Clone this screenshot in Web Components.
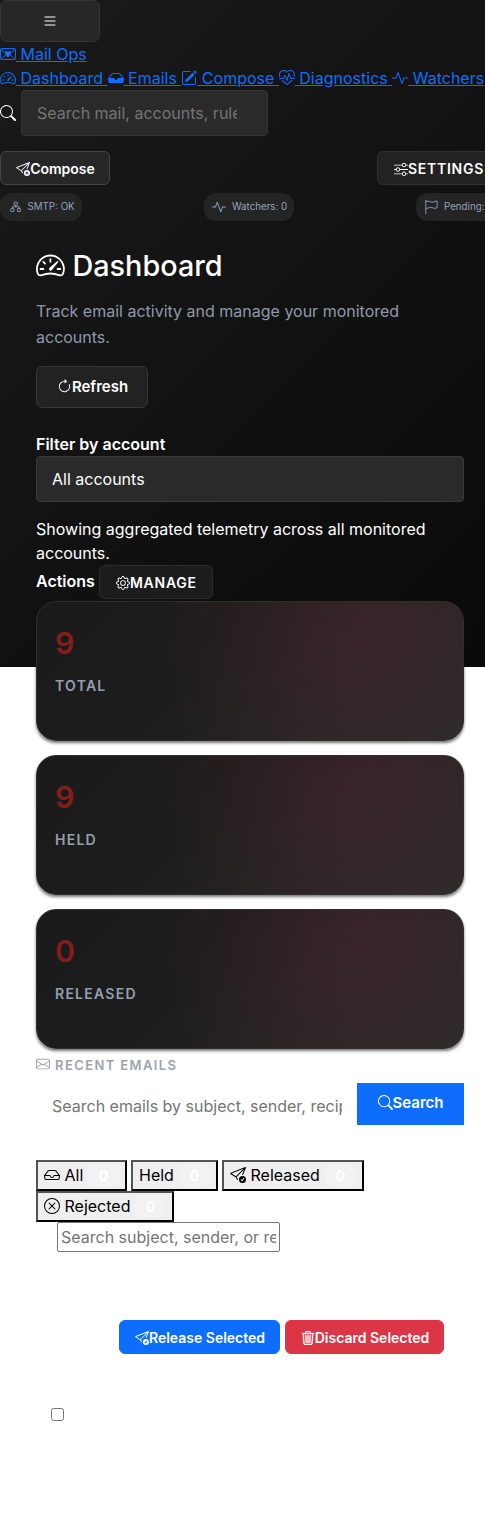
<!DOCTYPE html>
<html lang="en">
<head>
<meta charset="utf-8">
<title>Mail Ops</title>
<style>
html{background:#fff}
body{margin:0;font:16px/24px Inter,"Liberation Sans",sans-serif;color:#fff;width:485px;height:1530px;overflow:hidden;position:relative}
</style>
</head>
<body>
<mail-app></mail-app>
<script>
const ICONS={
list:'<path d="M2.5 12a.5.5 0 0 1 .5-.5h10a.5.5 0 0 1 0 1H3a.5.5 0 0 1-.5-.5m0-4a.5.5 0 0 1 .5-.5h10a.5.5 0 0 1 0 1H3a.5.5 0 0 1-.5-.5m0-4a.5.5 0 0 1 .5-.5h10a.5.5 0 0 1 0 1H3a.5.5 0 0 1-.5-.5"/>',
mailheart:'<g fill="none" stroke="currentColor"><rect x=".5" y="2.5" width="15" height="11" rx="1"/><path d="M1 3.500l3.500 2.700M15 3.500l-3.500 2.700M1 13l4.700-4M15 13l-4.700-4"/></g><path d="M8 5.600c2-2 6 1.100 0 5.900-6-4.800-2-7.900 0-5.900"/>',
speed:'<path d="M8 4a.5.5 0 0 1 .5.5V6a.5.5 0 0 1-1 0V4.5A.5.5 0 0 1 8 4M3.732 5.732a.5.5 0 0 1 .707 0l.915.914a.5.5 0 1 1-.708.708l-.914-.915a.5.5 0 0 1 0-.707M2 10a.5.5 0 0 1 .5-.5h1.586a.5.5 0 0 1 0 1H2.5A.5.5 0 0 1 2 10m9.5 0a.5.5 0 0 1 .5-.5h1.5a.5.5 0 0 1 0 1H12a.5.5 0 0 1-.5-.5m.754-4.246a.39.39 0 0 0-.527-.02L7.547 9.31a.91.91 0 1 0 1.302 1.258l3.434-4.297a.39.39 0 0 0-.029-.518z"/><path fill-rule="evenodd" d="M0 10a8 8 0 1 1 15.547 2.661c-.442 1.253-1.845 1.602-2.932 1.25C11.309 13.488 9.475 13 8 13c-1.474 0-3.31.488-4.615.911-1.087.352-2.49.003-2.932-1.25A8 8 0 0 1 0 10m8-7a7 7 0 0 0-6.603 9.329c.203.575.923.876 1.68.63C4.397 12.533 6.358 12 8 12s3.604.532 4.923.96c.757.245 1.477-.056 1.68-.631A7 7 0 0 0 8 3"/>',
inboxfill:'<path d="M4.98 4a.5.5 0 0 0-.39.188L1.54 8H6a.5.5 0 0 1 .5.5 1.5 1.5 0 1 0 3 0A.5.5 0 0 1 10 8h4.46l-3.05-3.812A.5.5 0 0 0 11.02 4zm-1.17-.437A1.5 1.5 0 0 1 4.98 3h6.04a1.5 1.5 0 0 1 1.17.563l3.7 4.625a.5.5 0 0 1 .106.374l-.39 3.124A1.5 1.5 0 0 1 14.117 13H1.883a1.5 1.5 0 0 1-1.489-1.314l-.39-3.124a.5.5 0 0 1 .106-.374z"/>',
inbox:'<path d="M4.98 4a.5.5 0 0 0-.39.188L1.54 8H6a.5.5 0 0 1 .5.5 1.5 1.5 0 1 0 3 0A.5.5 0 0 1 10 8h4.46l-3.05-3.812A.5.5 0 0 0 11.02 4zm9.954 5H10.45a2.5 2.5 0 0 1-4.9 0H1.066l.32 2.562a.5.5 0 0 0 .497.438h12.234a.5.5 0 0 0 .496-.438zM3.809 3.563A1.5 1.5 0 0 1 4.981 3h6.038a1.5 1.5 0 0 1 1.172.563l3.7 4.625a.5.5 0 0 1 .105.374l-.39 3.124A1.5 1.5 0 0 1 14.117 13H1.883a1.5 1.5 0 0 1-1.489-1.314l-.39-3.124a.5.5 0 0 1 .106-.374z"/>',
pencil:'<path d="M15.502 1.94a.5.5 0 0 1 0 .706L14.459 3.69l-2-2L13.502.646a.5.5 0 0 1 .707 0l1.293 1.293zm-1.75 2.456-2-2L4.939 9.21a.5.5 0 0 0-.121.196l-.805 2.414a.25.25 0 0 0 .316.316l2.414-.805a.5.5 0 0 0 .196-.12l6.813-6.814z"/><path fill-rule="evenodd" d="M1 13.5A1.5 1.5 0 0 0 2.5 15h11a1.5 1.5 0 0 0 1.5-1.5v-6a.5.5 0 0 0-1 0v6a.5.5 0 0 1-.5.5h-11a.5.5 0 0 1-.5-.5v-11a.5.5 0 0 1 .5-.5H9a.5.5 0 0 0 0-1H2.5A1.5 1.5 0 0 0 1 2.5z"/>',
heart:'<path fill-rule="evenodd" d="m8 2.748-.717-.737C5.6.281 2.514.878 1.4 3.053.918 3.995.78 5.323 1.508 7H.43c-2.128-5.697 4.165-8.83 7.394-5.857q.09.083.176.171a3 3 0 0 1 .176-.17c3.23-2.974 9.522.159 7.394 5.856h-1.078c.728-1.677.59-3.005.108-3.947C13.486.878 10.4.28 8.717 2.01zM2.212 10h1.315C4.593 11.183 6.05 12.458 8 13.795c1.949-1.337 3.407-2.612 4.473-3.795h1.315c-1.265 1.566-3.14 3.25-5.788 5-2.648-1.75-4.523-3.434-5.788-5"/><path d="M10.464 3.314a.5.5 0 0 0-.945.049L7.921 8.956 6.464 5.314a.5.5 0 0 0-.88-.091L3.732 8H.5a.5.5 0 0 0 0 1H4a.5.5 0 0 0 .416-.223l1.473-2.209 1.647 4.118a.5.5 0 0 0 .945-.049l1.598-5.593 1.457 3.642A.5.5 0 0 0 12 9h3.5a.5.5 0 0 0 0-1h-3.162z"/>',
activity:'<path d="M6 2a.5.5 0 0 1 .47.33L10 12.036l1.53-4.208A.5.5 0 0 1 12 7.5h3.5a.5.5 0 0 1 0 1h-3.15l-1.88 5.17a.5.5 0 0 1-.94 0L6 3.964 4.47 8.171A.5.5 0 0 1 4 8.5H.5a.5.5 0 0 1 0-1h3.15l1.88-5.17A.5.5 0 0 1 6 2"/>',
search:'<path d="M11.742 10.344a6.5 6.5 0 1 0-1.397 1.398h-.001q.044.06.098.115l3.85 3.85a1 1 0 0 0 1.415-1.414l-3.85-3.85a1 1 0 0 0-.115-.1zM12 6.5a5.5 5.5 0 1 1-11 0 5.5 5.5 0 0 1 11 0"/>',
sendplus:'<path d="M15.964.686a.5.5 0 0 0-.65-.65L.767 5.855a.75.75 0 0 0-.124 1.329l4.995 3.178 1.531 2.406a.5.5 0 0 0 .844-.536L6.637 10.07l7.494-7.494-1.895 4.738a.5.5 0 1 0 .928.372zm-2.54 1.183L5.93 9.363 1.591 6.602z"/><path fill-rule="evenodd" d="M16 12.5a3.5 3.5 0 1 1-7 0 3.5 3.5 0 0 1 7 0m-3.5-2a.5.5 0 0 0-.5.5v1h-1a.5.5 0 0 0 0 1h1v1a.5.5 0 0 0 1 0v-1h1a.5.5 0 0 0 0-1h-1v-1a.5.5 0 0 0-.5-.5"/>',
sendcheck:'<path d="M15.964.686a.5.5 0 0 0-.65-.65L.767 5.855a.75.75 0 0 0-.124 1.329l4.995 3.178 1.531 2.406a.5.5 0 0 0 .844-.536L6.637 10.07l7.494-7.494-1.895 4.738a.5.5 0 1 0 .928.372zm-2.54 1.183L5.93 9.363 1.591 6.602z"/><path d="M16 12.5a3.5 3.5 0 1 1-7 0 3.5 3.5 0 0 1 7 0m-1.993-1.679a.5.5 0 0 0-.686.172l-1.17 1.95-.547-.547a.5.5 0 0 0-.708.708l.774.773a.75.75 0 0 0 1.174-.144l1.335-2.226a.5.5 0 0 0-.172-.686"/>',
sliders:'<path fill-rule="evenodd" d="M11.5 2a1.5 1.5 0 1 0 0 3 1.5 1.5 0 0 0 0-3M9.05 3a2.5 2.5 0 0 1 4.9 0H16v1h-2.05a2.5 2.5 0 0 1-4.9 0H0V3zM4.5 7a1.5 1.5 0 1 0 0 3 1.5 1.5 0 0 0 0-3M2.05 8a2.5 2.5 0 0 1 4.9 0H16v1H6.95a2.5 2.5 0 0 1-4.9 0H0V8zm9.45 4a1.5 1.5 0 1 0 0 3 1.5 1.5 0 0 0 0-3m-2.45 1a2.5 2.5 0 0 1 4.9 0H16v1h-2.05a2.5 2.5 0 0 1-4.9 0H0v-1z"/>',
gear:'<path d="M8 4.754a3.246 3.246 0 1 0 0 6.492 3.246 3.246 0 0 0 0-6.492M5.754 8a2.246 2.246 0 1 1 4.492 0 2.246 2.246 0 0 1-4.492 0"/><path d="M9.796 1.343c-.527-1.79-3.065-1.79-3.592 0l-.094.319a.873.873 0 0 1-1.255.52l-.292-.16c-1.64-.892-3.433.902-2.54 2.541l.159.292a.873.873 0 0 1-.52 1.255l-.319.094c-1.79.527-1.79 3.065 0 3.592l.319.094a.873.873 0 0 1 .52 1.255l-.16.292c-.892 1.64.901 3.434 2.541 2.54l.292-.159a.873.873 0 0 1 1.255.52l.094.319c.527 1.79 3.065 1.79 3.592 0l.094-.319a.873.873 0 0 1 1.255-.52l.292.16c1.64.893 3.434-.902 2.54-2.541l-.159-.292a.873.873 0 0 1 .52-1.255l.319-.094c1.79-.527 1.79-3.065 0-3.592l-.319-.094a.873.873 0 0 1-.52-1.255l.16-.292c.893-1.64-.902-3.433-2.541-2.54l-.292.159a.873.873 0 0 1-1.255-.52zm-2.633.283c.246-.835 1.428-.835 1.674 0l.094.319a1.873 1.873 0 0 0 2.693 1.115l.291-.16c.764-.415 1.6.42 1.184 1.185l-.159.292a1.873 1.873 0 0 0 1.116 2.692l.318.094c.835.246.835 1.428 0 1.674l-.319.094a1.873 1.873 0 0 0-1.115 2.693l.16.291c.415.764-.42 1.6-1.185 1.184l-.291-.159a1.873 1.873 0 0 0-2.693 1.116l-.094.318c-.246.835-1.428.835-1.674 0l-.094-.319a1.873 1.873 0 0 0-2.692-1.115l-.292.16c-.764.415-1.6-.42-1.184-1.185l.159-.291A1.873 1.873 0 0 0 1.945 8.93l-.319-.094c-.835-.246-.835-1.428 0-1.674l.319-.094A1.873 1.873 0 0 0 3.06 4.377l-.16-.292c-.415-.764.42-1.6 1.185-1.184l.292.159a1.873 1.873 0 0 0 2.692-1.115z"/>',
refresh:'<path fill-rule="evenodd" d="M8 3a5 5 0 1 0 4.546 2.914.5.5 0 0 1 .908-.417A6 6 0 1 1 8 2z"/><path d="M8 4.466V.534a.25.25 0 0 1 .41-.192l2.36 1.966c.12.1.12.284 0 .384L8.41 4.658A.25.25 0 0 1 8 4.466"/>',
envelope:'<path d="M0 4a2 2 0 0 1 2-2h12a2 2 0 0 1 2 2v8a2 2 0 0 1-2 2H2a2 2 0 0 1-2-2zm2-1a1 1 0 0 0-1 1v.217l7 4.2 7-4.2V4a1 1 0 0 0-1-1zm13 2.383-4.708 2.825L15 11.105zm-.034 6.876-5.64-3.471L8 9.583l-1.326-.795-5.64 3.47A1 1 0 0 0 2 13h12a1 1 0 0 0 .966-.741M1 11.105l4.708-2.897L1 5.383z"/>',
xcircle:'<path d="M8 15A7 7 0 1 1 8 1a7 7 0 0 1 0 14m0 1A8 8 0 1 0 8 0a8 8 0 0 0 0 16"/><path d="M4.646 4.646a.5.5 0 0 1 .708 0L8 7.293l2.646-2.647a.5.5 0 0 1 .708.708L8.707 8l2.647 2.646a.5.5 0 0 1-.708.708L8 8.707l-2.646 2.647a.5.5 0 0 1-.708-.708L7.293 8 4.646 5.354a.5.5 0 0 1 0-.708"/>',
trash:'<path stroke="currentColor" stroke-width=".5" d="M6.5 1h3a.5.5 0 0 1 .5.5v1H6v-1a.5.5 0 0 1 .5-.5M11 2.5v-1A1.5 1.5 0 0 0 9.5 0h-3A1.5 1.5 0 0 0 5 1.5v1H1.5a.5.5 0 0 0 0 1h.538l.853 10.66A2 2 0 0 0 4.885 16h6.23a2 2 0 0 0 1.994-1.84l.853-10.66h.538a.5.5 0 0 0 0-1zm1.958 1-.846 10.58a1 1 0 0 1-.997.92h-6.23a1 1 0 0 1-.997-.92L3.042 3.5zm-7.487 1a.5.5 0 0 1 .528.47l.5 8.5a.5.5 0 0 1-.998.06L5 5.03a.5.5 0 0 1 .47-.53Zm5.058 0a.5.5 0 0 1 .47.53l-.5 8.5a.5.5 0 1 1-.998-.06l.5-8.5a.5.5 0 0 1 .528-.47M8 4.5a.5.5 0 0 1 .5.5v8.5a.5.5 0 0 1-1 0V5a.5.5 0 0 1 .5-.5"/>',
diagram:'<g fill="none" stroke="currentColor" stroke-width="1.3"><rect x="5.6" y="1.6" width="4.8" height="4" rx=".8"/><rect x="1" y="10.6" width="4.6" height="4" rx=".8"/><rect x="10.4" y="10.6" width="4.6" height="4" rx=".8"/><path d="M8 5.6V8M3.3 10.6V8h9.4v2.6"/></g>',
flag:'<path fill="none" stroke="currentColor" d="M2 0v16M2 1.500C6 .5 8 3.500 11 2.300L15 1v8C11 10.800 9 7.500 6 8.800L2 9.800"/>'
};
const define=(name,css,html)=>customElements.define(name,class extends HTMLElement{
  connectedCallback(){
    if(this.shadowRoot)return;
    const attrs=n=>this.getAttribute(n)||'';
    this.attachShadow({mode:'open'}).innerHTML=`<style>${css}</style>${typeof html==='function'?html(attrs):html}`;
  }
});
define('ui-icon',`:host{display:inline-block;width:1em;height:1em;line-height:1;vertical-align:-.125em;flex:none}svg{display:block;width:100%;height:100%}`,
  a=>`<svg viewBox="0 0 16 16" fill="currentColor">${ICONS[a('name')]}</svg>`);
define('nav-link',`a{color:#0d6efd;text-decoration:underline}`,
  a=>`<a href="#"><ui-icon name="${a('icon')}"></ui-icon> <slot></slot>${a('last')?'':' '}</a>`);
define('ui-button',`:host{display:inline-block;vertical-align:middle;height:34px}
button{box-sizing:border-box;width:100%;height:100%;margin:0;padding:var(--pad,1px 0 0 1px);display:flex;align-items:center;justify-content:center;border:1px solid var(--line,#363636);border-radius:var(--radius,6px);background:var(--bg,#222);color:#fff;font:600 var(--size,14px)/1 Inter,sans-serif;letter-spacing:var(--track,0);white-space:nowrap}`,
  a=>`<button>${a('icon')?`<ui-icon name="${a('icon')}"></ui-icon>`:''}<slot></slot></button>`);
define('status-pill',`:host{display:flex;align-items:center;box-sizing:border-box;height:28px;border-radius:12px;background:#242424;color:#94a3b8;font-size:9.75px;white-space:nowrap;padding-left:8px;gap:6px}
ui-icon{font-size:var(--icon,14px)}`,
  a=>`<ui-icon name="${a('icon')}"></ui-icon><slot></slot>`);
define('stat-card',`:host{display:block;box-sizing:border-box;height:140px;border:1px solid #2f2f30;border-radius:20px;padding:22px 18px;background:radial-gradient(circle at 75% 20%,rgba(220,53,85,.125),transparent 60%),linear-gradient(135deg,#1a1a1a,#1d1d1d 40%,#2a2a2a);box-shadow:0 2px 3px rgba(0,0,0,.55)}
b{display:block;font:600 30.4px/38px Inter,sans-serif;color:#861d1d}
span{display:block;margin-top:13px;font-size:14px;line-height:21px;font-weight:600;letter-spacing:1.25px;color:#94a0ae}`,
  a=>`<b>${a('value')}</b><span><slot></slot></span>`);
define('filter-tab',`:host{display:block}
button{display:flex;align-items:center;box-sizing:border-box;width:100%;height:31px;margin:0;padding:0 6px 1px;border:2px outset #000;background:#efefef;color:#000;font:16px Inter,sans-serif}
ui-icon{margin-right:4.5px}
i{margin-left:auto;box-sizing:border-box;width:31px;height:23px;margin-top:1px;border-radius:5px;background:#f2f2f2;color:#fff;font:700 14px/24px Inter,sans-serif;text-align:center}`,
  a=>`<button>${a('icon')?`<ui-icon name="${a('icon')}"></ui-icon>`:''}<slot></slot><i>0</i></button>`);
define('app-header',`:host{display:block;height:230px}
.line{height:24px;white-space:nowrap}
.search{display:flex;align-items:center;gap:5px;height:46px}
input{box-sizing:border-box;width:247px;height:46px;margin:0;padding:0 30px 0 15px;border:1px solid #363636;border-radius:4px;background:#2a2a2a;color:#fff;font:16px Inter,sans-serif;outline:0}
input::placeholder{color:#757575}
.row{display:flex;justify-content:space-between;width:500px}
.actions{margin-top:15px}.pills{margin-top:8px}`,
`<div style="height:42px"><ui-button icon="list" style="display:block;width:100px;height:42px;--bg:#272727;--radius:7px;--size:16px;--pad:0 0 1px"></ui-button></div>
<div class="line"><nav-link icon="mailheart" last="1">Mail Ops</nav-link></div>
<div class="line"><nav-link icon="speed">Dashboard</nav-link><nav-link icon="inboxfill">Emails</nav-link><nav-link icon="pencil">Compose</nav-link><nav-link icon="heart">Diagnostics</nav-link><nav-link icon="activity" last="1">Watchers</nav-link></div>
<div class="search"><ui-icon name="search"></ui-icon><input placeholder="Search mail, accounts, rules..."></div>
<div class="row actions"><ui-button icon="sendplus" style="width:110px;--bg:#272727;--line:#444">Compose</ui-button><ui-button icon="sliders" style="width:123px;--track:.75px;--line:#303030">SETTINGS</ui-button></div>
<div class="row pills"><status-pill icon="diagram" style="width:82px;padding-left:9.5px;gap:6.5px;--icon:11.5px">SMTP: OK</status-pill><status-pill icon="activity" style="width:90px">Watchers: 0</status-pill><status-pill icon="flag" style="width:84px">Pending:</status-pill></div>`);
define('account-panel',`:host{display:block}
h1{margin:0;font:500 28.8px/35px Inter,sans-serif;height:35px}
p{margin:0}.sub{margin-top:16px;line-height:25.6px;color:#8e9aab;height:51px}
.sub+ui-button{display:block;margin-top:16px}
label{display:block;margin-top:24px;font-weight:600}
select{display:block;appearance:none;box-sizing:border-box;width:428px;height:46px;padding:0 15px;border:1px solid #3a3a3a;border-radius:4px;background:#2a2a2a;color:#fff;font:16px Inter,sans-serif}
.note{margin-top:15px}
.act{display:flex;align-items:center;gap:4px;height:36px;font-weight:600}
.act span{margin-top:-4px}.act ui-button{margin-top:-2px}`,
`<h1><ui-icon name="speed"></ui-icon> Dashboard</h1>
<p class="sub">Track email activity and manage your monitored accounts.</p>
<ui-button icon="refresh" style="width:112px;height:42px;--size:15px;--pad:0 0 1px 1px">Refresh</ui-button>
<label>Filter by account</label><select><option>All accounts</option></select>
<p class="note">Showing aggregated telemetry across all monitored accounts.</p>
<div class="act"><span>Actions</span><ui-button icon="gear" style="width:114px;--track:.75px;--bg:#1c1c1c;--line:#2c2c2c">MANAGE</ui-button></div>`);
define('recent-emails',`:host{display:block}
h2{display:flex;align-items:center;gap:5px;margin:7px 0 0;height:18px;font-size:13px;line-height:18px;font-weight:600;letter-spacing:1.4px;color:#9ca3af}
h2 ui-icon{font-size:14px;position:relative;top:-1px}
.search{display:flex;height:46px;margin-top:9px}
.search input{box-sizing:border-box;width:321px;height:46px;margin:0;padding:0 15px 1px 16px;border:0;background:none;font:16px Inter,sans-serif}
input::placeholder{color:#757575}
.tabs{display:flex;flex-wrap:wrap;column-gap:4px;margin-top:31px}
.find{display:block;box-sizing:border-box;width:223px;height:30px;margin:0 0 0 21px;padding:1px 3px;border:1px solid #767676;border-radius:2px;font:16px Inter,sans-serif}
.bulk{display:flex;justify-content:flex-end;gap:5px;margin:68px 20px 0 0}
.check{display:block;width:13px;height:13px;margin:54px 0 0 15px}`,
`<h2><ui-icon name="envelope"></ui-icon><span>RECENT EMAILS</span></h2>
<div class="search"><input placeholder="Search emails by subject, sender, recipient..."><ui-button icon="search" style="width:107px;height:42px;--size:15px;--bg:#0d6efd;--line:#0d6efd;--radius:0;--pad:0 0 3px">Search</ui-button></div>
<div class="tabs"><filter-tab icon="inbox" style="width:91px">All</filter-tab><filter-tab style="width:87px">Held</filter-tab><filter-tab icon="sendcheck" style="width:142px">Released</filter-tab><filter-tab icon="xcircle" style="width:138px">Rejected</filter-tab></div>
<input class="find" placeholder="Search subject, sender, or recipient">
<div class="bulk"><ui-button icon="sendcheck" style="width:161px;--bg:#0d6efd;--line:#0d6efd">Release Selected</ui-button><ui-button icon="trash" style="width:159px;--bg:#dc3545;--line:#dc3545">Discard Selected</ui-button></div>
<input class="check" type="checkbox">`);
define('mail-app',`:host{display:block;background:linear-gradient(135deg,#1a1a1a,#0a0a0a) 0 0/485px 667px no-repeat;height:1530px}
main{width:428px;margin-left:36px;padding-top:18px}
.cards{display:grid;gap:14px}`,
`<app-header></app-header>
<main><account-panel></account-panel>
<div class="cards"><stat-card value="9">TOTAL</stat-card><stat-card value="9">HELD</stat-card><stat-card value="0">RELEASED</stat-card></div>
<recent-emails></recent-emails></main>`);
</script>
</body>
</html>
